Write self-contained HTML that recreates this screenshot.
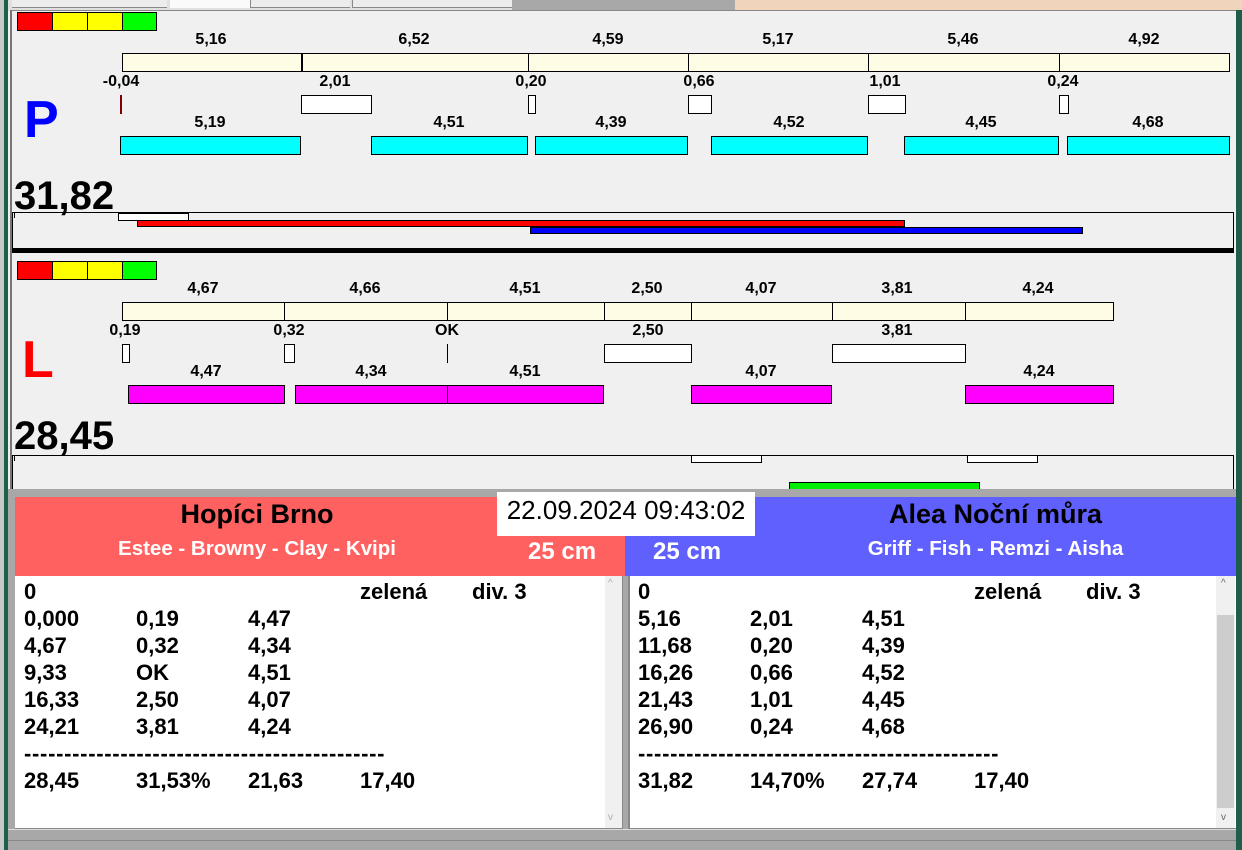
<!DOCTYPE html>
<html><head><meta charset="utf-8"><style>
*{margin:0;padding:0;box-sizing:border-box}
body{width:1242px;height:850px;background:#f0f0f0;position:relative;overflow:hidden;font-family:"Liberation Sans",Arial,sans-serif}
div{position:absolute}
.b{border:1px solid #000}
.y{background:#fffce6}
.w{background:#fff}
.c{background:#00ffff}
.m{background:#ff00ff}
.t{font-weight:bold;font-size:16px;transform:translateX(-50%);white-space:nowrap;line-height:18px;margin-top:0px}
.big{font-weight:bold;font-size:40px;line-height:42px}
.tx{font-weight:bold;font-size:22px;line-height:27px;white-space:pre}
</style></head><body>
<!-- top strip -->
<div style="left:0;top:0;width:1242px;height:11px;background:#e0e0e0"></div>
<div style="left:12px;top:0;width:155px;height:8px;border-bottom:1px solid #888;background:#ececec"></div>
<div style="left:170px;top:0;width:80px;height:8px;background:#fafafa"></div>
<div style="left:250px;top:0;width:100px;height:8px;border-bottom:1px solid #888;border-left:1px solid #888;background:#ececec"></div>
<div style="left:352px;top:0;width:160px;height:8px;border-bottom:1px solid #888;border-left:1px solid #888;background:#ececec"></div>
<div style="left:512px;top:0;width:223px;height:10px;background:#a8a8a8"></div>
<div style="left:735px;top:0;width:507px;height:11px;background:#f0d4bc"></div>
<div style="left:0;top:0;width:4px;height:850px;background:#c8c8c8"></div>
<div style="left:4px;top:0;width:4px;height:850px;background:#1f5e4c"></div>
<div style="left:1236px;top:10px;width:6px;height:840px;background:#1f5e4c"></div>
<div style="left:10px;top:10px;width:2px;height:480px;background:#777"></div>
<div style="left:12px;top:10px;width:1224px;height:1px;background:#888"></div>

<!-- P section -->
<div class="b" style="left:17px;top:12px;width:36px;height:19px;background:#f00"></div>
<div class="b" style="left:52px;top:12px;width:36px;height:19px;background:#ff0"></div>
<div class="b" style="left:87px;top:12px;width:36px;height:19px;background:#ff0"></div>
<div class="b" style="left:122px;top:12px;width:35px;height:19px;background:#0f0"></div>

<div class="t" style="left:211px;top:31px">5,16</div>
<div class="t" style="left:414px;top:31px">6,52</div>
<div class="t" style="left:608px;top:31px">4,59</div>
<div class="t" style="left:778px;top:31px">5,17</div>
<div class="t" style="left:963px;top:31px">5,46</div>
<div class="t" style="left:1144px;top:31px">4,92</div>
<div class="b y" style="left:122px;top:53px;width:1108px;height:19px"></div>
<div style="left:301px;top:53px;width:2px;height:19px;background:#000"></div>
<div style="left:528px;top:53px;width:1px;height:19px;background:#000"></div>
<div style="left:688px;top:53px;width:1px;height:19px;background:#000"></div>
<div style="left:868px;top:53px;width:1px;height:19px;background:#000"></div>
<div style="left:1059px;top:53px;width:1px;height:19px;background:#000"></div>

<div class="t" style="left:121px;top:73px">-0,04</div>
<div class="t" style="left:335px;top:73px">2,01</div>
<div class="t" style="left:531px;top:73px">0,20</div>
<div class="t" style="left:699px;top:73px">0,66</div>
<div class="t" style="left:885px;top:73px">1,01</div>
<div class="t" style="left:1063px;top:73px">0,24</div>
<div style="left:120px;top:95px;width:2px;height:19px;background:#800000"></div>
<div class="b w" style="left:301px;top:95px;width:71px;height:19px"></div>
<div class="b w" style="left:528px;top:95px;width:8px;height:19px"></div>
<div class="b w" style="left:688px;top:95px;width:24px;height:19px"></div>
<div class="b w" style="left:868px;top:95px;width:38px;height:19px"></div>
<div class="b w" style="left:1059px;top:95px;width:10px;height:19px"></div>

<div style="left:24px;top:90px;font-weight:bold;font-size:52px;color:#0000ff;line-height:60px">P</div>

<div class="t" style="left:210px;top:114px">5,19</div>
<div class="t" style="left:449px;top:114px">4,51</div>
<div class="t" style="left:611px;top:114px">4,39</div>
<div class="t" style="left:789px;top:114px">4,52</div>
<div class="t" style="left:981px;top:114px">4,45</div>
<div class="t" style="left:1148px;top:114px">4,68</div>
<div class="b c" style="left:120px;top:136px;width:181px;height:19px"></div>
<div class="b c" style="left:371px;top:136px;width:157px;height:19px"></div>
<div class="b c" style="left:535px;top:136px;width:153px;height:19px"></div>
<div class="b c" style="left:711px;top:136px;width:157px;height:19px"></div>
<div class="b c" style="left:904px;top:136px;width:155px;height:19px"></div>
<div class="b c" style="left:1067px;top:136px;width:163px;height:19px"></div>

<div class="big" style="left:14px;top:175px">31,82</div>
<div style="left:12px;top:212px;width:1222px;height:37px;border:1px solid #000;border-bottom:none"></div>
<div style="left:14px;top:213px;width:1px;height:5px;background:#000"></div>
<div class="b w" style="left:118px;top:213px;width:71px;height:8px"></div>
<div class="b" style="left:137px;top:220px;width:768px;height:7px;background:#f00"></div>
<div class="b" style="left:530px;top:227px;width:553px;height:7px;background:#00f"></div>
<div style="left:12px;top:248px;width:1222px;height:5px;background:#000"></div>

<!-- L section -->
<div class="b" style="left:17px;top:261px;width:36px;height:19px;background:#f00"></div>
<div class="b" style="left:52px;top:261px;width:36px;height:19px;background:#ff0"></div>
<div class="b" style="left:87px;top:261px;width:36px;height:19px;background:#ff0"></div>
<div class="b" style="left:122px;top:261px;width:35px;height:19px;background:#0f0"></div>

<div class="t" style="left:203px;top:280px">4,67</div>
<div class="t" style="left:365px;top:280px">4,66</div>
<div class="t" style="left:525px;top:280px">4,51</div>
<div class="t" style="left:647px;top:280px">2,50</div>
<div class="t" style="left:761px;top:280px">4,07</div>
<div class="t" style="left:897px;top:280px">3,81</div>
<div class="t" style="left:1038px;top:280px">4,24</div>
<div class="b y" style="left:122px;top:302px;width:992px;height:19px"></div>
<div style="left:284px;top:302px;width:1px;height:19px;background:#000"></div>
<div style="left:447px;top:302px;width:1px;height:19px;background:#000"></div>
<div style="left:604px;top:302px;width:1px;height:19px;background:#000"></div>
<div style="left:691px;top:302px;width:1px;height:19px;background:#000"></div>
<div style="left:832px;top:302px;width:1px;height:19px;background:#000"></div>
<div style="left:965px;top:302px;width:1px;height:19px;background:#000"></div>

<div class="t" style="left:125px;top:322px">0,19</div>
<div class="t" style="left:289px;top:322px">0,32</div>
<div class="t" style="left:447px;top:322px">OK</div>
<div class="t" style="left:648px;top:322px">2,50</div>
<div class="t" style="left:897px;top:322px">3,81</div>
<div class="b w" style="left:122px;top:344px;width:8px;height:19px"></div>
<div class="b w" style="left:284px;top:344px;width:11px;height:19px"></div>
<div style="left:447px;top:344px;width:1px;height:19px;background:#000"></div>
<div class="b w" style="left:604px;top:344px;width:88px;height:19px"></div>
<div class="b w" style="left:832px;top:344px;width:134px;height:19px"></div>

<div style="left:22px;top:330px;font-weight:bold;font-size:52px;color:#ff0000;line-height:60px">L</div>

<div class="t" style="left:206px;top:363px">4,47</div>
<div class="t" style="left:371px;top:363px">4,34</div>
<div class="t" style="left:525px;top:363px">4,51</div>
<div class="t" style="left:761px;top:363px">4,07</div>
<div class="t" style="left:1039px;top:363px">4,24</div>
<div class="b m" style="left:128px;top:385px;width:157px;height:19px"></div>
<div class="b m" style="left:295px;top:385px;width:153px;height:19px"></div>
<div class="b m" style="left:447px;top:385px;width:157px;height:19px"></div>
<div class="b m" style="left:691px;top:385px;width:141px;height:19px"></div>
<div class="b m" style="left:965px;top:385px;width:149px;height:19px"></div>

<div class="big" style="left:14px;top:415px">28,45</div>
<div style="left:12px;top:455px;width:1222px;height:35px;border:1px solid #000;border-bottom:none"></div>
<div style="left:14px;top:456px;width:1px;height:5px;background:#000"></div>
<div class="b w" style="left:691px;top:455px;width:71px;height:8px"></div>
<div class="b w" style="left:967px;top:455px;width:71px;height:8px"></div>
<div class="b" style="left:789px;top:482px;width:191px;height:8px;background:#00ee00"></div>

<!-- bottom -->
<div style="left:8px;top:489px;width:1228px;height:8px;background:#a8a8a8"></div>
<div style="left:8px;top:497px;width:7px;height:353px;background:#a8a8a8"></div>
<div style="left:15px;top:497px;width:610px;height:79px;background:#ff6060"></div>
<div style="left:625px;top:497px;width:611px;height:79px;background:#6060ff"></div>
<div style="left:497px;top:492px;width:258px;height:44px;background:#fff"></div>
<div style="left:497px;top:492px;width:258px;height:36px;font-size:26px;line-height:36px;text-align:center">22.09.2024 09:43:02</div>
<div style="left:15px;top:498px;width:484px;text-align:center;font-weight:bold;font-size:27px;line-height:32px">Hopíci Brno</div>
<div style="left:15px;top:538px;width:484px;text-align:center;font-weight:bold;font-size:20.5px;line-height:22px;color:#fff">Estee - Browny - Clay - Kvipi</div>
<div style="left:528px;top:539px;font-weight:bold;font-size:24px;line-height:26px;color:#fff">25 cm</div>
<div style="left:653px;top:539px;font-weight:bold;font-size:24px;line-height:26px;color:#fff">25 cm</div>
<div style="left:755px;top:498px;width:481px;text-align:center;font-weight:bold;font-size:27px;line-height:32px">Alea Noční můra</div>
<div style="left:755px;top:538px;width:481px;text-align:center;font-weight:bold;font-size:20.5px;line-height:22px;color:#fff">Griff - Fish - Remzi - Aisha</div>

<div style="left:15px;top:576px;width:608px;height:253px;background:#fff;border-right:1px solid #888;border-bottom:1px solid #888"></div>
<div style="left:605px;top:576px;width:17px;height:252px;background:#f0f0f0"></div>
<div style="left:608px;top:578px;font-size:10px;color:#aaa">^</div>
<div style="left:608px;top:812px;font-size:10px;color:#aaa">v</div>
<div style="left:623px;top:576px;width:5px;height:254px;background:#a8a8a8"></div>
<div style="left:628px;top:576px;width:608px;height:253px;background:#fff;border-left:2px solid #888;border-bottom:1px solid #888"></div>
<div style="left:1216px;top:576px;width:19px;height:252px;background:#f0f0f0"></div>
<div style="left:1217px;top:615px;width:17px;height:193px;background:#cdcdcd"></div>
<div style="left:1221px;top:578px;font-size:10px;color:#666">^</div>
<div style="left:1221px;top:812px;font-size:10px;color:#666">v</div>
<div style="left:8px;top:829px;width:1228px;height:21px;background:#a8a8a8;border-top:1px solid #ddd"></div>
<div style="left:8px;top:840px;width:1228px;height:1px;background:#888"></div>

<div class="tx" style="left:24px;top:578px">0</div>
<div class="tx" style="left:360px;top:578px">zelená</div>
<div class="tx" style="left:472px;top:578px">div. 3</div>
<div class="tx" style="left:24px;top:605px">0,000
4,67
9,33
16,33
24,21
<span style="letter-spacing:0.7px">---------------------------------------------</span>
28,45</div>
<div class="tx" style="left:136px;top:605px">0,19
0,32
OK
2,50
3,81

31,53%</div>
<div class="tx" style="left:248px;top:605px">4,47
4,34
4,51
4,07
4,24

21,63</div>
<div class="tx" style="left:360px;top:767px">17,40</div>

<div class="tx" style="left:638px;top:578px">0</div>
<div class="tx" style="left:974px;top:578px">zelená</div>
<div class="tx" style="left:1086px;top:578px">div. 3</div>
<div class="tx" style="left:638px;top:605px">5,16
11,68
16,26
21,43
26,90
<span style="letter-spacing:0.7px">---------------------------------------------</span>
31,82</div>
<div class="tx" style="left:750px;top:605px">2,01
0,20
0,66
1,01
0,24

14,70%</div>
<div class="tx" style="left:862px;top:605px">4,51
4,39
4,52
4,45
4,68

27,74</div>
<div class="tx" style="left:974px;top:767px">17,40</div>
</body></html>
